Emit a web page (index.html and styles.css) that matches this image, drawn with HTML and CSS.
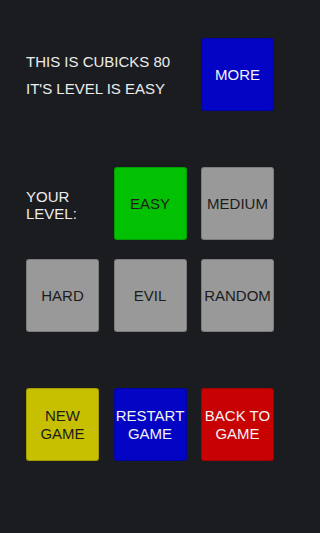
FILE: index.html
```html
<!DOCTYPE html>
<html>
<head>
<meta charset="utf-8">
<link rel="stylesheet" href="styles.css">
</head>
<body>
<div class="screen">
  <div class="row row-top">
    <div class="info">
      <div>THIS IS CUBICKS 80</div>
      <div>IT'S LEVEL IS EASY</div>
    </div>
    <div class="btn blue">MORE</div>
  </div>
  <div class="row row-level">
    <div class="label">YOUR<br>LEVEL:</div>
    <div class="btn green">EASY</div>
    <div class="btn gray">MEDIUM</div>
  </div>
  <div class="row row-level2">
    <div class="btn gray">HARD</div>
    <div class="btn gray">EVIL</div>
    <div class="btn gray">RANDOM</div>
  </div>
  <div class="row row-actions">
    <div class="btn yellow">NEW<br>GAME</div>
    <div class="btn blue">RESTART<br>GAME</div>
    <div class="btn red">BACK TO<br>GAME</div>
  </div>
</div>
</body>
</html>
```
FILE: styles.css
```css
html, body {
  margin: 0;
  padding: 0;
  background: #1b1c20;
}
body {
  width: 300px;
  height: 533px;
  overflow: hidden;
  font-family: "Liberation Sans", Arial, sans-serif;
  font-size: 15px;
  color: #ececec;
}
.screen {
  padding: 38px 0 0 26px;
}
.row {
  display: grid;
  grid-template-columns: 73px 73px 73px;
  column-gap: 14.5px;
  align-items: center;
}
.row-top {
  grid-template-columns: 160.5px 73px;
}
.info {
  line-height: 26.5px;
  margin-top: 2px;
}
.row-level { margin-top: 56px; }
.row-level2 { margin-top: 19px; }
.row-actions { margin-top: 56px; }
.label {
  line-height: 17px;
  margin-top: 2px;
}
.btn {
  box-sizing: border-box;
  width: 73px;
  height: 73px;
  border-radius: 3px;
  display: flex;
  align-items: center;
  justify-content: center;
  text-align: center;
  line-height: 18px;
  white-space: nowrap;
  color: #1c1c1c;
  border: 1px solid rgba(0,0,0,0.18);
}
.blue { background: #0404c4; color: #f2f2f2; }
.green { background: #02c002; }
.gray { background: #999999; }
.yellow { background: #c6c000; }
.red { background: #c80202; color: #f2f2f2; }
```
